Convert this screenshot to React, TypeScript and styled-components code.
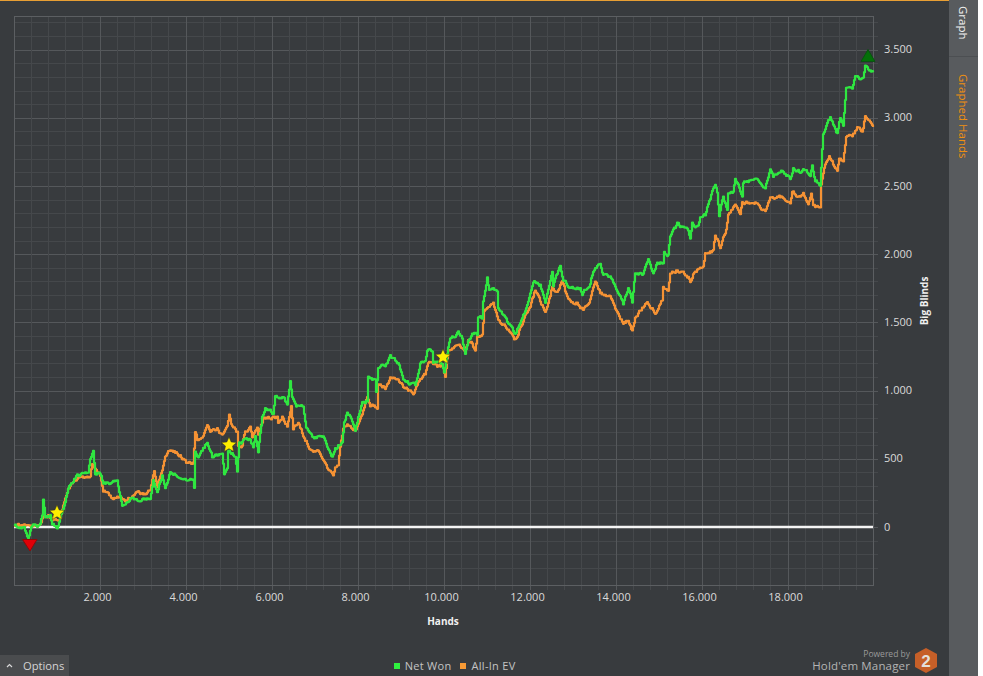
import { FC } from 'react';
import styled, { createGlobalStyle } from 'styled-components';

const GlobalStyle = createGlobalStyle`
  html, body {
    margin: 0;
    height: 100%;
    background: #fff;
    overflow: hidden;
  }
  #root {
    height: 100%;
  }
`;

const FONT = `'Open Sans', 'Noto Sans', sans-serif`;

const Page = styled.div`
  display: flex;
  width: 983px;
  height: 676px;
  font-family: ${FONT};
`;

const Main = styled.main`
  display: flex;
  flex-direction: column;
  width: 949px;
  height: 100%;
  background: #383b3e;
  border-top: 1px solid #e89f34;
  box-sizing: border-box;
`;

const Sidebar = styled.nav`
  display: flex;
  flex-direction: column;
  width: 29px;
  height: 100%;
  background: #585b5e;
`;

const SideTab = styled.div<{ $active?: boolean; $height: number }>`
  display: flex;
  justify-content: center;
  align-items: center;
  height: ${(p) => p.$height}px;
  box-sizing: border-box;
  padding-bottom: ${(p) => (p.$active ? 10 : 0)}px;
  padding-top: ${(p) => (p.$active ? 0 : 2)}px;
  writing-mode: vertical-rl;
  font-size: 11.5px;
  color: ${(p) => (p.$active ? '#f2f2f2' : '#f0900f')};
  border-bottom: ${(p) => (p.$active ? '1px solid #4c4f52' : 'none')};
`;

const ChartSvg = styled.svg`
  display: block;
  flex: none;
  width: 949px;
  height: 644px;
`;

const TickLabel = styled.text`
  font-family: ${FONT};
  font-size: 11px;
  fill: #dadada;
`;

const AxisTitle = styled.text`
  font-family: ${FONT};
  font-size: 10px;
  font-weight: 700;
  fill: #f0f0f0;
`;

const Footer = styled.footer`
  flex: 1;
  display: grid;
  grid-template-columns: 69px 1fr auto;
  align-items: end;
`;

const OptionsTab = styled.button`
  display: flex;
  align-items: center;
  gap: 10px;
  height: 21px;
  padding: 0 0 0 6px;
  border: none;
  background: #4a4c4e;
  color: #d4d4d4;
  font-family: ${FONT};
  font-size: 11.2px;
`;

const Legend = styled.div`
  display: flex;
  justify-content: center;
  align-items: center;
  gap: 9px;
  height: 21px;
  padding-left: 28px;
`;

const LegendItem = styled.div`
  display: flex;
  align-items: center;
  gap: 5px;
  color: #c4c4c4;
  font-size: 11px;
  letter-spacing: 0.3px;
`;

const Swatch = styled.span<{ $color: string }>`
  width: 6px;
  height: 6px;
  background: ${(p) => p.$color};
`;

const Brand = styled.div`
  display: flex;
  align-items: center;
  gap: 5px;
  padding: 0 12px 3px 0;
`;

const BrandText = styled.div`
  display: flex;
  flex-direction: column;
  align-items: flex-end;
`;

const PoweredBy = styled.span`
  color: #9a9a9a;
  font-size: 8.5px;
  line-height: 11px;
`;

const BrandName = styled.span`
  color: #b4b4b4;
  font-size: 11.5px;
  line-height: 14px;
  letter-spacing: 0.15px;
`;

const HexNumber = styled.text`
  font-family: 'Liberation Sans', sans-serif;
  font-size: 17px;
  font-weight: 700;
  fill: #e4e0dc;
`;

type Point = [number, number];

const GREEN: Point[] = [
  [14, 525], [20, 527], [24, 528], [28, 537], [32, 526], [40, 525], [42, 515], [43, 498], [45, 518], [50, 515],
  [52, 526], [57, 527], [62, 510], [68, 490], [75, 477], [82, 473], [88, 472], [90, 460], [93, 453], [95, 473],
  [100, 473], [103, 482], [112, 483], [117, 480], [120, 495], [122, 507], [130, 500], [140, 502], [150, 497],
  [153, 478], [157, 490], [162, 475], [165, 487], [170, 472], [180, 478], [193, 480], [194, 487], [195, 452],
  [198, 458], [207, 443], [212, 457], [222, 453], [224, 475], [227, 468], [228, 452], [235, 455], [237, 470],
  [239, 443], [250, 438], [253, 447], [255, 435], [258, 450], [262, 418], [265, 408], [273, 413], [275, 395],
  [282, 397], [287, 405], [290, 380], [292, 395], [296, 405], [303, 408], [306, 430], [313, 438], [323, 437],
  [328, 452], [332, 457], [335, 450], [342, 442], [344, 423], [347, 412], [350, 417], [355, 430], [360, 410],
  [362, 402], [367, 400], [368, 377], [375, 380], [376, 392], [378, 367], [385, 367], [390, 358], [398, 362],
  [403, 377], [410, 384], [415, 385], [420, 363], [425, 360], [427, 350], [432, 352], [433, 362], [442, 363],
  [444, 372], [450, 338], [458, 333], [462, 338], [465, 353], [468, 342], [472, 333], [477, 335], [478, 318],
  [482, 318], [483, 300], [487, 277], [489, 290], [497, 290], [498, 307], [507, 322], [515, 335], [520, 322],
  [525, 310], [533, 280], [540, 285], [545, 303], [552, 270], [553, 285], [560, 268], [563, 282], [570, 288],
  [580, 288], [582, 295], [590, 283], [593, 270], [600, 263], [603, 275], [610, 277], [618, 293], [623, 305],
  [628, 290], [632, 302], [635, 273], [642, 275], [648, 260], [653, 275], [657, 263], [663, 262], [664, 252],
  [668, 255], [670, 238], [677, 225], [687, 230], [690, 238], [692, 223], [698, 227], [700, 217], [705, 215],
  [708, 203], [715, 183], [717, 193], [719, 217], [723, 197], [727, 210], [728, 193], [733, 192], [735, 180],
  [742, 195], [743, 182], [755, 180], [765, 188], [770, 171], [773, 177], [782, 170], [790, 179], [793, 167],
  [800, 173], [803, 167], [810, 177], [812, 167], [815, 180], [820, 184], [822, 147], [823, 133], [830, 117],
  [837, 133], [840, 117], [843, 125], [846, 88], [852, 88], [855, 77], [863, 80], [865, 65], [868, 68], [873, 73],
];

const ORANGE: Point[] = [
  [14, 526], [40, 526], [44, 515], [48, 515], [52, 520], [55, 520], [60, 518], [63, 505], [68, 490], [75, 480],
  [82, 478], [90, 478], [92, 465], [95, 470], [100, 475], [103, 490], [112, 497], [120, 498], [125, 500], [135, 495],
  [145, 493], [150, 490], [154, 472], [157, 487], [162, 470], [165, 455], [170, 450], [180, 455], [187, 463],
  [193, 463], [195, 433], [197, 440], [202, 440], [207, 427], [210, 432], [217, 428], [222, 437], [227, 425],
  [229, 413], [231, 423], [237, 432], [238, 447], [242, 445], [245, 430], [250, 427], [252, 437], [257, 427],
  [258, 435], [263, 418], [277, 417], [278, 423], [282, 417], [287, 425], [291, 405], [293, 428], [298, 422],
  [305, 440], [310, 448], [317, 452], [323, 458], [328, 470], [333, 477], [335, 467], [338, 463], [340, 447],
  [343, 430], [348, 425], [355, 430], [362, 415], [367, 397], [370, 405], [377, 407], [378, 382], [385, 388],
  [390, 377], [398, 378], [403, 388], [413, 393], [420, 377], [425, 373], [428, 363], [437, 367], [442, 365],
  [445, 377], [448, 352], [457, 347], [465, 350], [468, 340], [472, 342], [475, 351], [477, 336], [482, 335],
  [484, 310], [493, 303], [498, 318], [507, 330], [515, 340], [520, 327], [530, 305], [535, 290], [545, 312],
  [552, 287], [557, 292], [562, 280], [567, 298], [577, 303], [583, 310], [590, 298], [595, 280], [600, 292],
  [610, 297], [618, 315], [623, 323], [628, 320], [632, 330], [635, 318], [647, 302], [655, 312], [662, 300],
  [663, 287], [668, 290], [670, 275], [677, 270], [688, 277], [690, 282], [693, 273], [703, 265], [705, 253],
  [713, 250], [715, 235], [720, 248], [726, 230], [728, 215], [735, 203], [740, 215], [742, 203], [755, 202],
  [765, 212], [770, 198], [783, 197], [790, 205], [792, 192], [800, 198], [803, 193], [808, 203], [811, 193],
  [813, 205], [820, 210], [821, 187], [824, 170], [829, 155], [837, 172], [839, 157], [843, 162], [846, 135],
  [852, 135], [857, 127], [862, 132], [865, 117], [873, 125],
];

// waypoints read off the picture, filled in with a seeded stair-step walk
const toPath = (points: Point[], seed: number): string => {
  let state = seed;
  let walk = 0;
  const next = () => {
    state = (state * 1664525 + 1013904223) % 4294967296;
    return state / 4294967296 - 0.5;
  };
  const out: string[] = [];
  let lastY = points[0][1];
  points.forEach(([x, y], i) => {
    if (i === 0) {
      out.push(`M${x} ${y}`);
      return;
    }
    const [px, py] = points[i - 1];
    const steps = Math.max(1, Math.round(x - px));
    for (let s = 1; s <= steps; s += 1) {
      const t = s / steps;
      walk = walk * 0.65 + next() * 3;
      const nx = px + (x - px) * t;
      const ny = py + (y - py) * t + walk;
      out.push(`L${nx.toFixed(1)} ${lastY.toFixed(1)}L${nx.toFixed(1)} ${ny.toFixed(1)}`);
      lastY = ny;
    }
  });
  return out.join('');
};

const starPoints = (cx: number, cy: number, r: number): string =>
  Array.from({ length: 10 }, (_, i) => {
    const radius = i % 2 === 0 ? r : r * 0.46;
    const angle = (Math.PI / 5) * i - Math.PI / 2;
    return `${(cx + radius * Math.cos(angle)).toFixed(1)},${(cy + radius * Math.sin(angle)).toFixed(1)}`;
  }).join(' ');

const PLOT = { left: 14, right: 873, top: 16, bottom: 585 };
const xAt = (i: number) => Math.round(13.5 + 17.2 * i) + 0.5;
const yAt = (n: number) => Math.round(527 - 13.64 * n) + 0.5;

const Grid: FC = () => {
  const columns = Array.from({ length: 50 }, (_, i) => i).slice(1);
  const rows = Array.from({ length: 41 }, (_, i) => i - 3);
  return (
    <g>
      {rows.map((n) => (
        <line
          key={n}
          x1={PLOT.left}
          x2={878}
          y1={yAt(n)}
          y2={yAt(n)}
          stroke={n % 5 === 0 ? '#55585b' : '#45484b'}
        />
      ))}
      {columns.map((i) => (
        <line
          key={i}
          x1={xAt(i)}
          x2={xAt(i)}
          y1={PLOT.top}
          y2={590}
          stroke={i % 5 === 0 ? '#55585b' : '#45484b'}
        />
      ))}
      <rect
        x={PLOT.left + 0.5}
        y={PLOT.top + 0.5}
        width={PLOT.right - PLOT.left}
        height={PLOT.bottom - PLOT.top}
        fill="none"
        stroke="#5c5f62"
      />
    </g>
  );
};

const xLabels = ['2.000', '4.000', '6.000', '8.000', '10.000', '12.000', '14.000', '16.000', '18.000'];
const yLabels = ['0', '500', '1.000', '1.500', '2.000', '2.500', '3.000', '3.500'];
const stars: Point[] = [[57, 513], [229, 445], [443, 357]];

const Chart: FC = () => (
  <ChartSvg viewBox="0 1 949 644">
    <Grid />
    <line x1={PLOT.left} x2={PLOT.right} y1={527} y2={527} stroke="#f4f4f4" strokeWidth={2.4} />
    <path d={toPath(ORANGE, 11)} fill="none" stroke="#f59234" strokeWidth={2.2} strokeLinejoin="round" />
    <path d={toPath(GREEN, 29)} fill="none" stroke="#2fe640" strokeWidth={2.2} strokeLinejoin="round" />
    {stars.map(([x, y]) => (
      <polygon key={x} points={starPoints(x, y, 8)} fill="#ffee00" stroke="#33331c" strokeWidth={0.5} />
    ))}
    <polygon points="22.5,539.5 37,539.5 30,551" fill="#e00008" stroke="#8a0a0a" />
    <polygon points="868,49.5 875,61.5 861,61.5" fill="#037008" stroke="#0a5212" />
    {xLabels.map((label, i) => (
      <TickLabel key={label} x={97.5 + 86 * i} y={601} textAnchor="middle">
        {label}
      </TickLabel>
    ))}
    {yLabels.map((label, i) => (
      <TickLabel key={label} x={884} y={530.5 - 68.2 * i}>
        {label}
      </TickLabel>
    ))}
    <AxisTitle x={443} y={625} textAnchor="middle">Hands</AxisTitle>
    <AxisTitle transform="translate(927.5 301) rotate(-90)" textAnchor="middle">Big Blinds</AxisTitle>
  </ChartSvg>
);

const HexLogo: FC = () => (
  <svg width="22" height="25" viewBox="0 0 22 25">
    <polygon points="11,0 22,6 22,19 11,25 0,19 0,6" fill="#c65f28" />
    <HexNumber x={11} y={18.5} textAnchor="middle">2</HexNumber>
  </svg>
);

const Caret: FC = () => (
  <svg width="7" height="5" viewBox="0 0 7 5">
    <path d="M1 4 L3.5 1.5 L6 4" fill="none" stroke="#d8d8d8" strokeWidth="1.2" />
  </svg>
);

const App: FC = () => (
  <Page>
    <GlobalStyle />
    <Main>
      <Chart />
      <Footer>
        <OptionsTab>
          <Caret />
          Options
        </OptionsTab>
        <Legend>
          <LegendItem>
            <Swatch $color="#2ff03f" />
            Net Won
          </LegendItem>
          <LegendItem>
            <Swatch $color="#f79a35" />
            All-In EV
          </LegendItem>
        </Legend>
        <Brand>
          <BrandText>
            <PoweredBy>Powered by</PoweredBy>
            <BrandName>Hold'em Manager</BrandName>
          </BrandText>
          <HexLogo />
        </Brand>
      </Footer>
    </Main>
    <Sidebar>
      <SideTab $active $height={57}>Graph</SideTab>
      <SideTab $height={117}>Graphed Hands</SideTab>
    </Sidebar>
  </Page>
);

export default App;
